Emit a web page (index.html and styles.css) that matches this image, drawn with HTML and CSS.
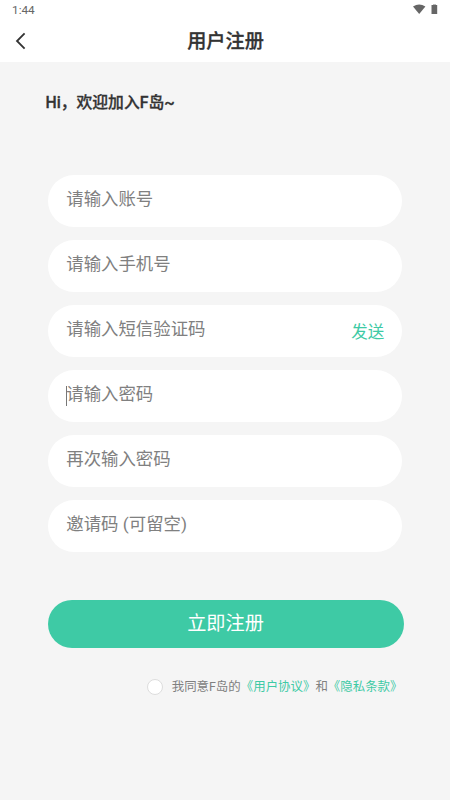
FILE: index.html
```html
<!DOCTYPE html>
<html lang="zh-CN">
<head>
<meta charset="utf-8">
<title>用户注册</title>
<link rel="stylesheet" href="styles.css">
</head>
<body>
<header class="top">
  <div class="status">
    <span class="time">1:44</span>
    <svg class="sysicons" width="26" height="12" viewBox="0 0 26 12"><path d="M1 2.6Q7.2-1.8 13.4 2.6L7.2 10Z" fill="#666"/><path d="M21 0h3v1h-3z" fill="#bbb"/><path d="M19.5 1h5.7v9h-5.7z" fill="#666"/></svg>
  </div>
  <div class="nav">
    <svg class="back" width="12" height="18" viewBox="0 0 12 18"><path d="M9.6 1.3L2 9l7.6 7.7" fill="none" stroke="#333" stroke-width="1.8"/></svg>
    <h1>用户注册</h1>
  </div>
</header>
<main>
  <h2>Hi，欢迎加入F岛~</h2>
  <form class="fields">
    <div class="field"><span>请输入账号</span></div>
    <div class="field"><span>请输入手机号</span></div>
    <div class="field"><span>请输入短信验证码</span><a class="send">发送</a></div>
    <div class="field"><i class="caret"></i><span>请输入密码</span></div>
    <div class="field"><span>再次输入密码</span></div>
    <div class="field"><span>邀请码 (可留空)</span></div>
  </form>
  <div class="submit">立即注册</div>
  <div class="agree"><i class="radio"></i><span>我同意F岛的<a>《用户协议》</a>和<a>《隐私条款》</a></span></div>
</main>
</body>
</html>
```
FILE: styles.css
```css
* { box-sizing: border-box; }
body { margin: 0; height: 800px; overflow: hidden; background: #f5f5f5; color: #333; font-family: Roboto, "Noto Sans CJK SC", sans-serif; }
.top { height: 62px; background: #fff; }
.status { height: 20px; display: flex; justify-content: space-between; padding: 0 12px; }
.time { font: 400 11.8px/20px Roboto, sans-serif; color: #666; }
.sysicons { margin: 4px 0 0; }
.nav { height: 42px; display: grid; grid-template-columns: 48px 1fr 48px; align-items: center; }
.back { margin: -1px 0 0 15px; }
h1 { margin: 0; padding: 2px 0 0 1px; text-align: center; font-size: 19.2px; line-height: 40px; font-weight: 500; -webkit-text-stroke: 0.3px #333; }
main { padding: 28px 47px 0 48px; }
h2 { margin: 0 0 0 -2.5px; height: 85px; font-size: 15.8px; line-height: 25px; font-weight: 500; -webkit-text-stroke: 0.3px #333; }
.fields { display: grid; gap: 13.5px; }
.field { position: relative; width: 354px; height: 51.5px; margin-left: 0.3px; border-radius: 26px; background: #fff; padding: 0 18px; display: flex; align-items: center; justify-content: space-between; font-size: 17.4px; line-height: 46px; color: #808080; }
.field span { padding-bottom: 3px; }
.send { color: #3ecaa5; font-size: 16.5px; padding-top: 4px; }
.caret { position: absolute; left: 18px; top: 16px; width: 1px; height: 20px; background: #777; }
.submit { margin: 48.5px -0.5px 0; width: 356px; height: 47.5px; line-height: 48px; border-radius: 24px; background: #3ecaa5; color: #fff; text-align: center; font-size: 19.2px; }
.agree { display: flex; align-items: center; justify-content: flex-end; margin: 29px 0.5px 0 0; line-height: 20px; font-size: 12.45px; color: #808080; }
.agree a { color: #3ecaa5; }
.radio { width: 16px; height: 16px; border: 1px solid #ddd; border-radius: 50%; background: #fff; margin: 1px 9px 0 0; }
```
